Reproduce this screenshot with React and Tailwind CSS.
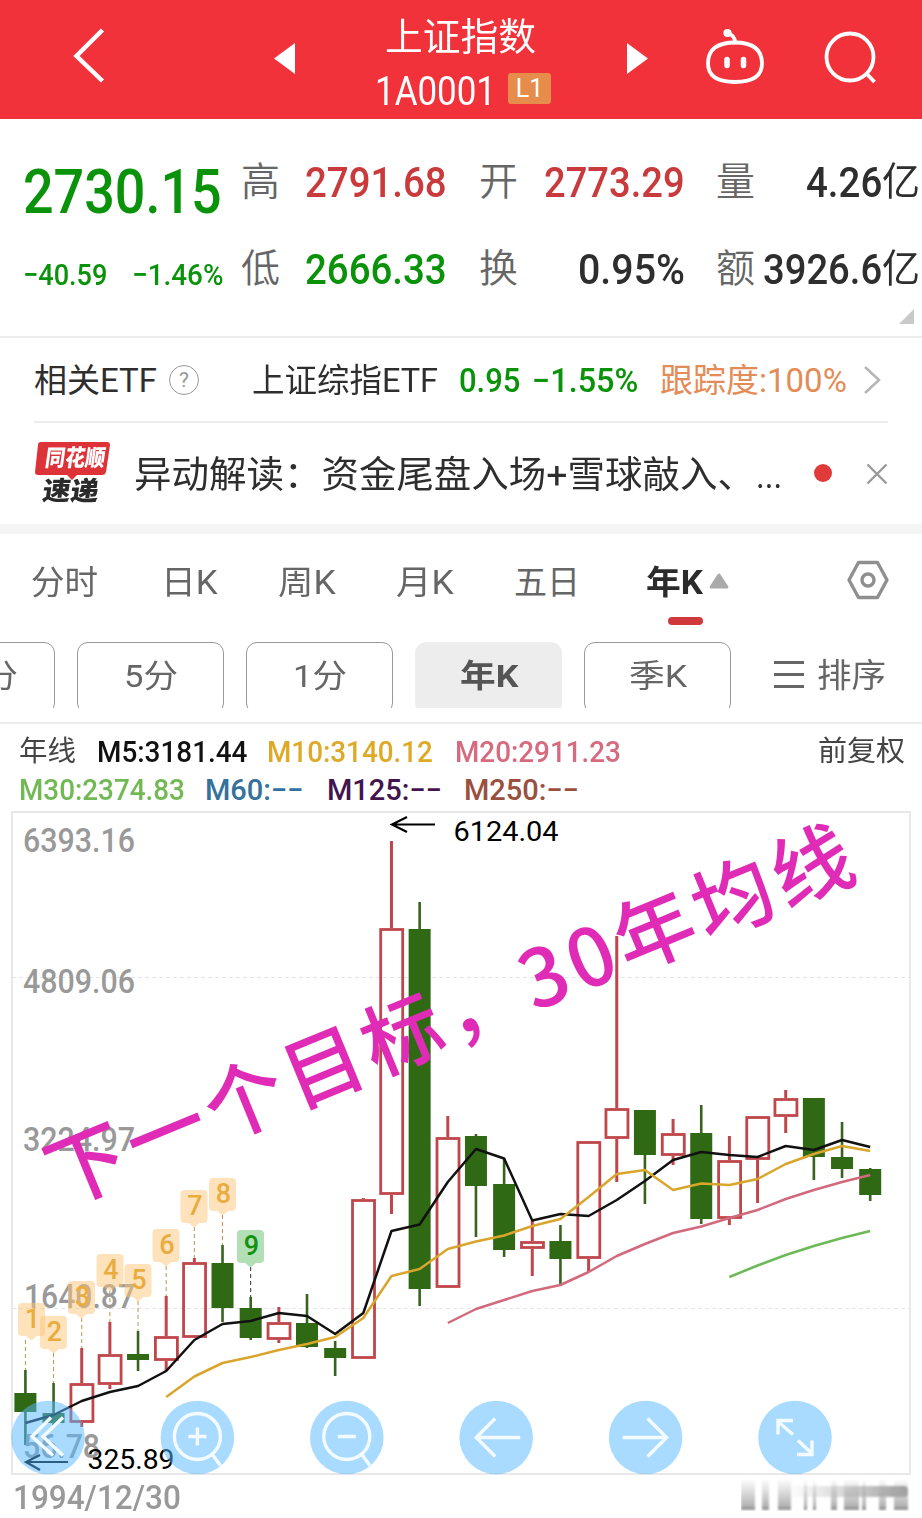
import { useLayoutEffect, useRef } from "react";

const FONT = "font-['Roboto','Noto_Sans_CJK_SC',sans-serif]";

// One line of text, condensed or widened to fill the width of its box.
function Fit({ className = "", children }) {
  const box = useRef(null);
  const line = useRef(null);
  useLayoutEffect(() => {
    const s = box.current.clientWidth / line.current.offsetWidth;
    line.current.style.transform = `scaleX(${s})`;
  }, [children]);
  return (
    <span ref={box} className={`block shrink-0 ${className}`}>
      <span ref={line} className="inline-block origin-left whitespace-nowrap">
        {children}
      </span>
    </span>
  );
}

function Header() {
  return (
    <header className="flex h-[119px] items-start bg-[#f1323a] text-white">
      <svg className="ml-[72px] mt-[27px] h-[58px] w-[34px]" viewBox="0 0 34 58" fill="none" stroke="currentColor" strokeWidth="4.5">
        <path d="M30.500 3 4.500 29 30.500 54" />
      </svg>
      <svg className="ml-[168px] mt-[43px] h-[31px] w-[22px]" viewBox="0 0 22 31" fill="currentColor">
        <path d="M21 0v31L0 15.500z" />
      </svg>
      <div className="ml-[79px] flex w-[177px] flex-col pt-[14px]">
        <Fit className="ml-[10px] w-[151px] text-[38px] leading-[46px]">上证指数</Fit>
        <div className="mt-[6px] flex items-center">
          <Fit className="w-[121px] text-[41px] leading-[50px]">1A0001</Fit>
          <span className="ml-[12px] -mt-[5px] flex h-[31px] w-[43px] items-center justify-center rounded-[3px] bg-[#e78d4b] text-[25px] leading-none">
            L1
          </span>
        </div>
      </div>
      <svg className="ml-[75px] mt-[43px] h-[31px] w-[22px]" viewBox="0 0 22 31" fill="currentColor">
        <path d="M0 0v31L21 15.500z" />
      </svg>
      <svg className="ml-[56px] mt-[28px] h-[58px] w-[60px]" viewBox="0 0 60 58" fill="none" stroke="currentColor" strokeWidth="3.800" strokeLinecap="round">
        <path d="M30 14.500C13 14.500 3 21 3 35.500 3 48 12 54 30 54s27-6 27-18.500C57 21 47 14.500 30 14.500z" />
        <path d="M30 14.500c0-5-2-8-8-9.500" />
        <circle cx="22.500" cy="5" r="2.200" fill="currentColor" />
        <path d="M22 31.500v6M38.500 31.500v6" strokeWidth="5.500" />
      </svg>
      <svg className="ml-[58px] mt-[30px] h-[56px] w-[56px]" viewBox="0 0 56 56" fill="none" stroke="currentColor" strokeWidth="3.800">
        <circle cx="27" cy="27" r="23.500" />
        <path d="m43 43 8.500 9" />
      </svg>
    </header>
  );
}

const LABEL = "w-[39px] text-[39px] leading-[50px] text-[#666] font-[350]";
const VALUE = "text-[43px] leading-[50px] font-medium";

function Quote() {
  return (
    <section className="relative flex h-[219px] border-b-2 border-[#ececec] pt-[38px]">
      <div className="ml-[23px] w-[200px] text-[#0a920a]">
        <Fit className="w-[199px] text-[62px] font-medium leading-[70px]">2730.15</Fit>
        <div className="mt-[28px] flex justify-between">
          <Fit className="w-[84px] text-[30px] font-medium leading-[40px]">−40.59</Fit>
          <Fit className="w-[91px] text-[30px] font-medium leading-[40px]">−1.46%</Fit>
        </div>
      </div>
      <div className="ml-[18px] flex flex-col gap-[37px]">
        <div className="flex">
          <Fit className={LABEL}>高</Fit>
          <Fit className={`ml-[25px] w-[142px] text-[#c83a3c] ${VALUE}`}>2791.68</Fit>
          <Fit className={`ml-[32px] ${LABEL}`}>开</Fit>
          <Fit className={`ml-[26px] w-[141px] text-[#c83a3c] ${VALUE}`}>2773.29</Fit>
          <Fit className={`ml-[31px] ${LABEL}`}>量</Fit>
          <Fit className={`ml-[51px] w-[76px] text-[#2e2e2e] ${VALUE}`}>4.26</Fit>
          <Fit className="w-[38px] text-[39px] leading-[50px] text-[#2e2e2e]">亿</Fit>
        </div>
        <div className="flex">
          <Fit className={LABEL}>低</Fit>
          <Fit className={`ml-[25px] w-[142px] text-[#0a920a] ${VALUE}`}>2666.33</Fit>
          <Fit className={`ml-[32px] ${LABEL}`}>换</Fit>
          <Fit className={`ml-[60px] w-[107px] text-[#2e2e2e] ${VALUE}`}>0.95%</Fit>
          <Fit className={`ml-[31px] ${LABEL}`}>额</Fit>
          <Fit className={`ml-[8px] w-[119px] text-[#2e2e2e] ${VALUE}`}>3926.6</Fit>
          <Fit className="w-[38px] text-[39px] leading-[50px] text-[#2e2e2e]">亿</Fit>
        </div>
      </div>
      <svg className="absolute bottom-[12px] right-[8px] h-[15px] w-[15px]" viewBox="0 0 15 15">
        <path d="M15 0v15H0z" fill="#c9c9c9" />
      </svg>
    </section>
  );
}

function EtfRow() {
  return (
    <section className="ml-[34px] mr-[34px] flex h-[85px] items-center border-b-2 border-[#ececec] pt-[3px] text-[33px] leading-[44px] text-[#2e2e2e]">
      <Fit className="w-[123px]">相关ETF</Fit>
      <span className="-mt-[2px] ml-[12px] flex h-[30px] w-[30px] items-center justify-center rounded-full border-[1.500px] border-[#999] text-[21px] leading-none text-[#999]">
        ?
      </span>
      <Fit className="ml-[53px] w-[186px]">上证综指ETF</Fit>
      <Fit className="ml-[21px] w-[61px] font-medium text-[#0a920a]">0.95</Fit>
      <Fit className="ml-[12px] w-[106px] font-medium text-[#0a920a]">−1.55%</Fit>
      <Fit className="ml-[22px] w-[187px] text-[#e38c58]">跟踪度:100%</Fit>
      <svg className="-mt-[3px] ml-[16px] h-[30px] w-[20px]" viewBox="0 0 20 30" fill="none" stroke="#b5b5b5" strokeWidth="2.500">
        <path d="m2 2 14 13L2 28" />
      </svg>
    </section>
  );
}

function NewsRow() {
  return (
    <section className="flex h-[101px] items-start pl-[34px]">
      <div className="relative mt-[18px] h-[64px] w-[77px]">
        <svg className="absolute inset-0 h-full w-full" viewBox="0 0 77 64">
          <path d="M7 1h66q3 0 3 3l-4 27q-1 3-4 3H43l-5 5-5-5H4q-3 0-3-3L4 4q0-3 3-3z" fill="#dd3237" />
        </svg>
        <div className="relative flex -skew-x-8 flex-col">
          <Fit className="ml-[9px] mt-[3px] w-[60px] text-[23px] font-black leading-[30px] text-white">同花顺</Fit>
          <Fit className="ml-[11px] w-[56px] text-[26px] font-black leading-[35px] text-[#2b2b2b]">速递</Fit>
        </div>
      </div>
      <Fit className="ml-[23px] mt-[27px] w-[621px] text-[37px] leading-[52px] text-[#2e2e2e]">
        异动解读：资金尾盘入场+雪球敲入、
      </Fit>
      <Fit className="ml-[1px] mt-[27px] w-[26px] text-[37px] leading-[52px] text-[#2e2e2e]">...</Fit>
      <span className="ml-[32px] mt-[41px] h-[18px] w-[18px] rounded-full bg-[#e03a3a]" />
      <svg className="ml-[34px] mt-[40px] h-[22px] w-[22px]" viewBox="0 0 22 22" stroke="#999" strokeWidth="2.400">
        <path d="m1.500 1.500 19 19M20.500 1.500l-19 19" />
      </svg>
    </section>
  );
}

function PeriodTabs() {
  return (
    <nav className="relative flex h-[118px] items-start border-t-[10px] border-[#f5f5f5] pl-[31px] pt-[26px] text-[33px] leading-[46px] text-[#666]">
      <Fit className="w-[67px]">分时</Fit>
      <Fit className="ml-[63px] w-[57px]">日K</Fit>
      <Fit className="ml-[60px] w-[58px]">周K</Fit>
      <Fit className="ml-[60px] w-[58px]">月K</Fit>
      <Fit className="ml-[60px] w-[66px]">五日</Fit>
      <div className="ml-[66px] flex w-[57px] flex-col">
        <Fit className="w-[57px] font-bold text-[#2b2b2b]">年K</Fit>
        <span className="ml-[22px] mt-[11px] h-[8px] w-[35px] rounded-full bg-[#d0383c]" />
      </div>
      <svg className="ml-[6px] mt-[13px] h-[16px] w-[20px]" viewBox="0 0 20 16">
        <path d="M8.500 1.500q1.500-2 3 0L19 13q1 2.500-1 2.500H2Q0 15.500 1 13z" fill="#aaa" />
      </svg>
      <svg className="ml-[117px] -mt-px h-[42px] w-[44px]" viewBox="0 0 44 42" fill="none" stroke="#8f8f8f" strokeWidth="3.400" strokeLinejoin="round">
        <path d="M12.500 3.500h19L41 21l-9.500 17.500h-19L3 21z" />
        <circle cx="22" cy="21" r="6" />
      </svg>
    </nav>
  );
}

const CHIP = "flex h-[72px] w-[147px] shrink-0 justify-center rounded-[11px] border-[1.500px] pt-[10px]";

function IntervalChips() {
  return (
    <div className="flex h-[82px] border-b-2 border-[#ececec] text-[32px] leading-[46px] text-[#666]">
      <div className="flex h-[66px] w-[731px] justify-end gap-[22px] overflow-hidden">
        <div className={`${CHIP} border-[#999]`}><Fit className="w-[72px]">15分</Fit></div>
        <div className={`${CHIP} border-[#999]`}><Fit className="w-[54px]">5分</Fit></div>
        <div className={`${CHIP} border-[#999]`}><Fit className="w-[54px]">1分</Fit></div>
        <div className={`${CHIP} border-[#ededed] bg-[#ededed] font-bold text-[#555]`}><Fit className="w-[58px]">年K</Fit></div>
        <div className={`${CHIP} border-[#999]`}><Fit className="w-[58px]">季K</Fit></div>
      </div>
      <svg className="ml-[43px] mt-[18px] h-[29px] w-[30px]" viewBox="0 0 30 29" stroke="#666" strokeWidth="2.800">
        <path d="M0 2.500h30M0 14.500h30M0 26.500h30" />
      </svg>
      <Fit className="ml-[13px] mt-[11px] w-[69px] text-[33px]">排序</Fit>
    </div>
  );
}

function Legend() {
  return (
    <div className="flex h-[87px] flex-col pl-[19px] pt-[9px] text-[29px] font-medium leading-[38px]">
      <div className="flex">
        <Fit className="w-[57px] text-[28px] font-normal text-[#444]">年线</Fit>
        <Fit className="ml-[21px] w-[150px] text-[#111]">M5:3181.44</Fit>
        <Fit className="ml-[20px] w-[166px] text-[#deA926]">M10:3140.12</Fit>
        <Fit className="ml-[22px] w-[166px] text-[#d66b80]">M20:2911.23</Fit>
        <Fit className="ml-[197px] w-[87px] text-[28px] font-normal text-[#444]">前复权</Fit>
      </div>
      <div className="flex">
        <Fit className="w-[166px] text-[#72b955]">M30:2374.83</Fit>
        <Fit className="ml-[20px] w-[99px] text-[#34729c]">M60:−−</Fit>
        <Fit className="ml-[23px] w-[115px] text-[#43154f]">M125:−−</Fit>
        <Fit className="ml-[22px] w-[115px] text-[#99503f]">M250:−−</Fit>
      </div>
    </div>
  );
}

// [rising, high, open/close top, open/close bottom, low], in drawing units
const CANDLES = [
  [0, 1370, 1393, 1412, 1445], [0, 1383, 1413, 1423, 1425], [1, 1348, 1383, 1423, 1427],
  [1, 1322, 1354, 1385, 1389], [0, 1331, 1354, 1360, 1371], [1, 1296, 1336, 1361, 1371],
  [1, 1258, 1262, 1338, 1338], [0, 1245, 1263, 1308, 1322], [0, 1297, 1308, 1338, 1340],
  [1, 1307, 1322, 1340, 1343], [0, 1294, 1323, 1347, 1348], [0, 1341, 1348, 1358, 1376],
  [1, 1198, 1199, 1359, 1359], [1, 841, 928, 1195, 1214], [0, 902, 929, 1289, 1306],
  [1, 1116, 1137, 1288, 1288], [0, 1134, 1136, 1186, 1237], [0, 1158, 1184, 1250, 1257],
  [1, 1221, 1241, 1249, 1276], [0, 1225, 1241, 1259, 1286], [1, 1141, 1141, 1259, 1272],
  [1, 936, 1108, 1139, 1182], [0, 1110, 1110, 1155, 1204], [1, 1119, 1133, 1156, 1165],
  [0, 1105, 1133, 1219, 1224], [1, 1136, 1160, 1219, 1225], [1, 1116, 1116, 1160, 1203],
  [1, 1090, 1098, 1117, 1133], [0, 1098, 1098, 1157, 1180], [0, 1122, 1157, 1169, 1178],
  [0, 1168, 1169, 1195, 1201],
];
const cx = (i) => 25.4 + i * 28.16;

const AVERAGES = [
  { from: 0, color: "#111", ys: [1423, 1415, 1401, 1392, 1386, 1371, 1340, 1324, 1321, 1313, 1316, 1334, 1313, 1231, 1224.5, 1182, 1149, 1158.5, 1220.5, 1214, 1216, 1200, 1181, 1160, 1152, 1155, 1157, 1146, 1150, 1140, 1147] },
  { from: 5, color: "#d9a52c", ys: [1397, 1376.5, 1363, 1357, 1350, 1344, 1337, 1318, 1276, 1269, 1249, 1241.5, 1235.5, 1226, 1219, 1197, 1174, 1170, 1190, 1183.5, 1185, 1179, 1164, 1154, 1146, 1151] },
  { from: 15, color: "#d2697c", ys: [1323, 1309, 1300, 1291, 1285, 1272, 1256, 1244, 1233, 1226.5, 1218, 1210, 1199, 1190, 1182, 1175] },
  { from: 25, color: "#6cb957", ys: [1277, 1265.5, 1255, 1246, 1238, 1231] },
];

// [x, y] of each numbered tag's top-left corner
const TAGS = [[18, 1303], [40, 1316], [68, 1281], [96.5, 1254], [124.5, 1264], [152.500, 1229], [180.500, 1190], [209, 1178], [237, 1230]];

const SCALE = [
  [23, 852, 112, "6393.16"], [23, 993, 112, "4809.06"], [23, 1151, 112, "3224.97"],
  [24, 1308, 111, "1640.87"], [23, 1458, 77, "56.78"],
];

const BUTTONS = [
  <path key="a" d="M3-20-16-1 5 18M15-20-5-1 15 18" />,
  <g key="b"><circle r="23" cy="-1" /><path d="M-9-1H9M0-10V8M15 17l8 11" /></g>,
  <g key="c"><circle r="23" cy="-1" /><path d="M-9-1H9M15 17l8 11" /></g>,
  <path key="d" d="M24 0H-20M-1-19-20 0-1 19" />,
  <path key="e" d="M-23 0H20M2-19 21 0 2 19" />,
  <path key="f" d="M-2-3-17-16M-17-3V-17H-2M3 3 17 16M17 3V17H2" />,
];

function Chart() {
  return (
    <svg className={`block h-[666px] w-[922px] ${FONT}`} viewBox="0 811 922 666" fill="none">
      <rect x="12" y="812" width="898" height="662" stroke="#e8e8e8" strokeWidth="2" />
      <path d="M12 977.500H910M12 1308.500H910" stroke="#e4e4e4" strokeDasharray="4 3" />

      {TAGS.map(([x, y], i) => (
        <path
          key={i}
          d={`M${cx(i)} ${y + 37}V${CANDLES[i][1]}`}
          stroke={i === 8 ? "#333" : "#b9974f"}
          strokeDasharray="4 3"
        />
      ))}

      {CANDLES.map(([up, hi, top, bottom, lo], i) => {
        const x = cx(i);
        return up ? (
          <g key={i} stroke="#bf474b" strokeWidth="3">
            <path d={`M${x} ${hi}V${top}M${x} ${bottom}V${lo}`} />
            <rect x={x - 10.8} y={top + 1.5} width="22" height={bottom - top - 3} strokeWidth="2.800" />
          </g>
        ) : (
          <g key={i}>
            <path d={`M${x} ${hi}V${lo}`} stroke="#37631f" strokeWidth="2.600" />
            <rect x={x - 11} y={top} width="22" height={bottom - top} fill="#306914" />
          </g>
        );
      })}

      {SCALE.map(([x, y, w, t]) => (
        <text key={t} x={x} y={y} fontSize="33" fontWeight="500" fill="#999" textLength={w} lengthAdjust="spacingAndGlyphs">{t}</text>
      ))}

      {TAGS.map(([x, y], i) => (
        <g key={i}>
          <path
            d={`M${x + 4} ${y}h19q4 0 4 4v25q0 4-4 4h-4l-5.500 4.500-5.500-4.500h-4q-4 0-4-4v-25q0-4 4-4z`}
            fill={i === 8 ? "#7ec986" : "#fbc579"}
            fillOpacity={i === 8 ? 0.6 : 0.5}
          />
          <text x={x + 14.5} y={y + 25} fontSize="27" fontWeight="500" textAnchor="middle" fill={i === 8 ? "#12910f" : "#e9ac3e"}>
            {i + 1}
          </text>
        </g>
      ))}

      {AVERAGES.map(({ from, color, ys }) => (
        <polyline key={color} points={ys.map((y, i) => `${cx(from + i)},${y}`).join(" ")} stroke={color} strokeWidth="2.500" strokeLinejoin="round" />
      ))}

      <g stroke="#000" strokeWidth="2.200">
        <path d="M435 824.500H392M407 817l-15 7.500 15 7.500" />
        <path d="M68 1462H27M40 1455l-14 7 14 8" />
      </g>
      <text x="453.500" y="841" fontSize="28.500" fill="#000" textLength="105" lengthAdjust="spacingAndGlyphs">6124.04</text>
      <text x="87.500" y="1469" fontSize="27.500" fill="#000" textLength="87" lengthAdjust="spacingAndGlyphs">325.89</text>

      <text
        transform="translate(61 1207) rotate(-22.400)"
        fontSize="80"
        fontWeight="500"
        fill="#e02bb6"
        textLength="864"
        lengthAdjust="spacing"
        className="font-['Noto_Sans_CJK_SC',sans-serif]"
      >
        下一个目标，30年均线
      </text>

      {BUTTONS.map((icon, i) => (
        <g key={i} transform={`translate(${48 + i * 149.4} 1437.500)`}>
          <circle r="36.800" fill="#55b9ff" fillOpacity="0.510" />
          <g stroke="#f4fbff" strokeWidth="3.400">{icon}</g>
        </g>
      ))}
    </svg>
  );
}

const SMEARS = [
  [0, 14], [21, 7], [37, 13], [63, 3], [72, 3], [90, 6], [103, 15], [121, 4], [138, 7], [153, 14],
];

function DateRow() {
  return (
    <footer className="flex h-[41px] items-start justify-between pl-[13px] pr-[12px]">
      <Fit className="w-[168px] text-[33px] leading-[42px] font-medium text-[#999]">1994/12/30</Fit>
      <svg className="h-[34px] w-[169px]" viewBox="0 0 169 34">
        <defs>
          <linearGradient id="down" x1="0" y1="0" x2="0" y2="1">
            <stop offset="0" stopColor="#aaa" stopOpacity="0" />
            <stop offset="1" stopColor="#a8a8a8" />
          </linearGradient>
          <linearGradient id="across">
            <stop offset="0" stopColor="#bbb" stopOpacity="0" />
            <stop offset="1" stopColor="#999" />
          </linearGradient>
          <filter id="soft"><feGaussianBlur stdDeviation="0.800" /></filter>
        </defs>
        <g filter="url(#soft)">
          <rect x="45" y="9" width="122" height="11" rx="4" fill="url(#across)" />
          {SMEARS.map(([x, w]) => (
            <g key={x}>
              <rect x={x} y="2" width={w} height="31" fill="url(#down)" />
              <rect x={x} y="30" width={w} height="3" fill="#999" />
            </g>
          ))}
        </g>
      </svg>
    </footer>
  );
}

export default function App() {
  return (
    <main className={`h-[1518px] w-[922px] overflow-hidden bg-white ${FONT}`}>
      <Header />
      <Quote />
      <EtfRow />
      <NewsRow />
      <PeriodTabs />
      <IntervalChips />
      <Legend />
      <Chart />
      <DateRow />
    </main>
  );
}
